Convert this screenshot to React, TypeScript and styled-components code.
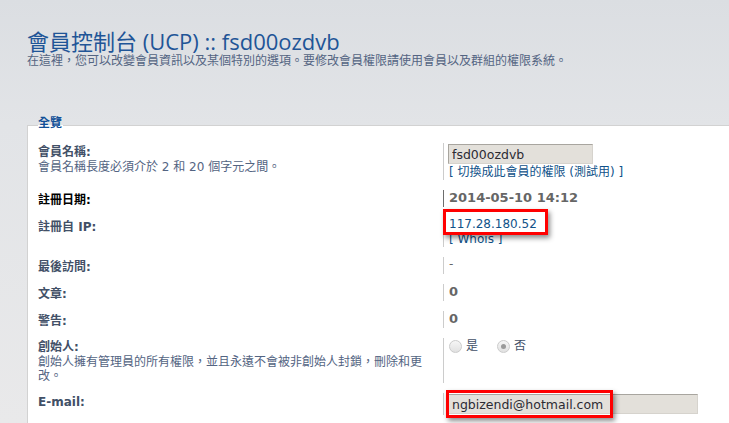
import styled, { createGlobalStyle } from "styled-components";

const GlobalStyle = createGlobalStyle`
  html, body {
    margin: 0;
    height: 100%;
    overflow: hidden;
  }
  body {
    background: linear-gradient(#dbdee2 0, #e2e4e7 125px, #e9e9ea 423px);
    font-family: "DejaVu Sans", "Noto Sans CJK TC", sans-serif;
    color: #536482;
  }
`;

function App() {
  return (
    <>
      <GlobalStyle />
      <Page>
        <Header>
          <Title>會員控制台 (UCP) :: fsd00ozdvb</Title>
          <Intro>在這裡，您可以改變會員資訊以及某個特別的選項。要修改會員權限請使用會員以及群組的權限系統。</Intro>
        </Header>

        <Panel>
          <Legend>全覽</Legend>

          <Row>
            <Term>
              <Label>會員名稱:</Label>
              <Hint>會員名稱長度必須介於 2 和 20 個字元之間。</Hint>
            </Term>
            <Def>
              <TextBox $width={145} defaultValue="fsd00ozdvb" readOnly />
              <Link href="#">[ 切換成此會員的權限 (測試用) ]</Link>
            </Def>
          </Row>

          <Row>
            <Term $offset={4}>
              <Label $plain>註冊日期:</Label>
            </Term>
            <Def $line="#6d6d6d">
              <Value>2014-05-10 14:12</Value>
            </Def>
          </Row>

          <Row>
            <Term $offset={4}>
              <Label>註冊自 IP:</Label>
            </Term>
            <Def>
              <Marked>
                <Link href="#">117.28.180.52</Link>
                <MarkBox $top={-8} $left={-6} $right={-11} $bottom={-3} />
              </Marked>
              <Link href="#">[ Whois ]</Link>
            </Def>
          </Row>

          <Row>
            <Term $offset={3}>
              <Label>最後訪問:</Label>
            </Term>
            <Def>
              <Plain>-</Plain>
            </Def>
          </Row>

          <Row>
            <Term $offset={3}>
              <Label>文章:</Label>
            </Term>
            <Def>
              <Value>0</Value>
            </Def>
          </Row>

          <Row>
            <Term $offset={3}>
              <Label>警告:</Label>
            </Term>
            <Def>
              <Value>0</Value>
            </Def>
          </Row>

          <Row>
            <Term>
              <Label>創始人:</Label>
              <Hint>創始人擁有管理員的所有權限，並且永遠不會被非創始人封鎖，刪除和更改。</Hint>
            </Term>
            <Def>
              <Choices>
                <Choice>
                  <Radio type="radio" name="founder" disabled readOnly />是
                </Choice>
                <Choice>
                  <Radio type="radio" name="founder" disabled checked readOnly />否
                </Choice>
              </Choices>
            </Def>
          </Row>

          <Row>
            <Term>
              <Label>E-mail:</Label>
            </Term>
            <Def>
              <Marked>
                <TextBox $width={250} defaultValue="ngbizendi@hotmail.com" readOnly />
                <MarkBox $top={-3} $left={-3} $width={167} $bottom={-3} />
              </Marked>
            </Def>
          </Row>
        </Panel>
      </Page>
    </>
  );
}

export default App;

const Page = styled.div`
  box-sizing: border-box;
  display: flex;
  flex-direction: column;
  height: 100vh;
  padding: 28px 0 0 27px;
`;

const Header = styled.div`
  display: flex;
  flex-direction: column;
`;

const Title = styled.h1`
  margin: 0;
  font-family: "Open Sans", "Noto Sans CJK TC", sans-serif;
  font-size: 22px;
  font-weight: normal;
  line-height: 26px;
  color: #1f5597;
`;

const Intro = styled.p`
  margin: 0;
  font-size: 12px;
  line-height: 15px;
  color: #536482;
`;

const Panel = styled.fieldset`
  flex: 1;
  margin: 48px -20px 0 0;
  padding: 5px 0 0 10px;
  min-width: 0;
  background: #fff;
  border: 1px solid #d2d2d2;
  border-right: none;
  border-bottom: none;
`;

const Legend = styled.legend`
  padding: 0 1px 4px 0;
  font-size: 12px;
  font-weight: bold;
  line-height: 12px;
  color: #115098;
`;

const Row = styled.dl`
  display: flex;
  margin: 0;
  padding: 5px 0;
`;

/* single-line labels sit a little lower than their value, without growing the row */
const Term = styled.dt<{ $offset?: number }>`
  flex: none;
  width: 405px;
  padding-top: ${(p) => p.$offset ?? 2}px;
  line-height: ${(p) => (p.$offset ? 17 - p.$offset : 15)}px;
`;

const Label = styled.span<{ $plain?: boolean }>`
  display: block;
  font-size: 12px;
  font-weight: bold;
  color: ${(p) => (p.$plain ? "#000" : "#425067")};
`;

const Hint = styled.span`
  display: block;
  font-size: 12px;
  line-height: 14px;
  color: #536482;
`;

const Def = styled.dd<{ $line?: string }>`
  display: flex;
  flex-direction: column;
  align-items: flex-start;
  margin: 0;
  padding-left: 5px;
  min-height: 17px;
  border-left: 1px solid ${(p) => p.$line || "#cccccc"};
  font-size: 12px;
  line-height: 15px;
`;

const TextBox = styled.input<{ $width: number }>`
  box-sizing: border-box;
  width: ${(p) => p.$width}px;
  height: 20px;
  margin: 1px 0 1px -1px;
  padding: 0 3px;
  font-family: "DejaVu Sans", sans-serif;
  font-size: 12.5px;
  color: #2b2b33;
  background: #e3e0da;
  border: 1px solid #d6d3cd;
  border-top-color: #a8a59f;
  border-left-color: #a8a59f;
  outline: none;
`;

const Link = styled.a`
  display: block;
  font-size: 12px;
  line-height: 15px;
  color: #105289;
  text-decoration: none;
`;

const Value = styled.strong`
  font-size: 13px;
  line-height: 15px;
  color: #666;
`;

const Plain = styled.span`
  color: #666;
`;

const Marked = styled.span`
  position: relative;
  display: inline-block;
`;

const MarkBox = styled.span<{
  $top: number;
  $left: number;
  $bottom: number;
  $right?: number;
  $width?: number;
}>`
  position: absolute;
  top: ${(p) => p.$top}px;
  left: ${(p) => p.$left}px;
  bottom: ${(p) => p.$bottom}px;
  ${(p) => (p.$width ? `width: ${p.$width}px;` : `right: ${p.$right}px;`)}
  box-sizing: border-box;
  border: 3px solid #ff0000;
  box-shadow: 2px 3px 5px rgba(0, 0, 0, 0.45);
  pointer-events: none;
`;

const Choices = styled.div`
  display: flex;
  gap: 19px;
  padding-top: 1px;
`;

const Choice = styled.label`
  display: inline-flex;
  align-items: center;
  gap: 4px;
  font-size: 12px;
  color: #425067;
`;

const Radio = styled.input`
  appearance: none;
  position: relative;
  width: 13px;
  height: 13px;
  margin: 0;
  border: 1px solid #cbcbcb;
  border-radius: 50%;
  background: linear-gradient(#f6f6f6, #e1e1e1);

  &:checked::after {
    content: "";
    position: absolute;
    top: 3px;
    left: 3px;
    width: 5px;
    height: 5px;
    border-radius: 50%;
    background: #9a9a9a;
  }
`;
